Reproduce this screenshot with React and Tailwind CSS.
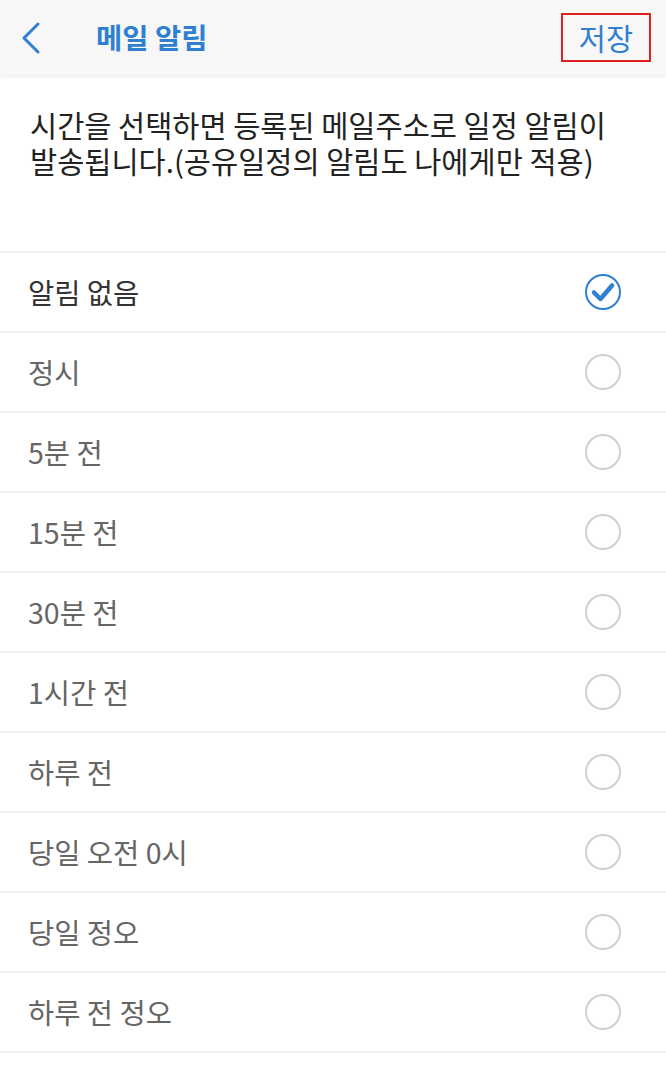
import React, { useState } from "react";

const options = [
  "알림 없음",
  "정시",
  "5분 전",
  "15분 전",
  "30분 전",
  "1시간 전",
  "하루 전",
  "당일 오전 0시",
  "당일 정오",
  "하루 전 정오",
];

const font = {
  fontFamily: '"Noto Sans CJK KR", "Noto Sans", sans-serif',
};

const App = () => {
  const [selected, setSelected] = useState(0);

  return (
    <div className="w-[666px] min-h-[1069px] bg-white" style={font}>
      {/* header */}
      <div className="relative h-[75px] bg-[#f7f7f7] flex items-center shadow-[0_2px_4px_rgba(0,0,0,0.08)]">
        <button className="ml-[18px] w-[26px] h-[36px] flex items-center justify-center">
          <svg width="22" height="34" viewBox="0 0 22 34" fill="none">
            <path d="M18 3L4 17L18 31" stroke="#2f80d1" strokeWidth="3" strokeLinecap="round" strokeLinejoin="round" />
          </svg>
        </button>
        <h1 className="ml-[52px] text-[28.5px] font-bold text-[#2f80d1] leading-none">메일 알림</h1>
        <button className="ml-auto mr-[15px] w-[90px] h-[49px] border-2 border-[#e02020] flex items-center justify-center text-[29.5px] text-[#2f80d1] leading-none">
          저장
        </button>
      </div>

      {/* description */}
      <div className="px-[30px] pt-[31px] pb-[73px]">
        <p className="text-[29.5px] leading-[36px] text-[#222]">
          시간을 선택하면 등록된 메일주소로 일정 알림이 발송됩니다.(공유일정의 알림도 나에게만 적용)
        </p>
      </div>

      {/* options */}
      <ul className="border-t-2 border-[#f0f0f0]">
        {options.map((opt, i) => (
          <li
            key={opt}
            onClick={() => setSelected(i)}
            className="h-[80px] flex items-center justify-between pl-[28px] pr-[44px] border-b-2 border-[#f0f0f0]"
          >
            <span className={`text-[28.5px] leading-none ${selected === i ? "text-[#333]" : "text-[#666]"}`}>{opt}</span>
            {selected === i ? (
              <svg width="38" height="38" viewBox="0 0 38 38" fill="none">
                <circle cx="19" cy="19" r="17" stroke="#2f80d1" strokeWidth="2" />
                <path d="M10 19.5L16.5 26L28 12.5" stroke="#2f80d1" strokeWidth="4.5" strokeLinecap="round" strokeLinejoin="round" />
              </svg>
            ) : (
              <svg width="38" height="38" viewBox="0 0 38 38" fill="none">
                <circle cx="19" cy="19" r="17" stroke="#cfd0d3" strokeWidth="2" />
              </svg>
            )}
          </li>
        ))}
      </ul>
    </div>
  );
};

export default App;
